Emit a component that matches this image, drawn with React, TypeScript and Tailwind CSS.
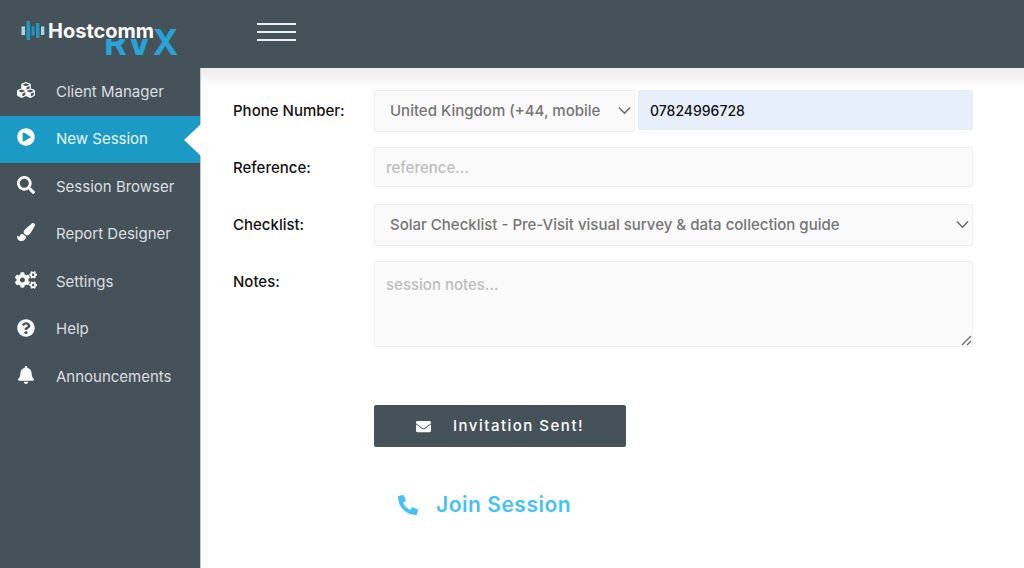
import { useState } from "react";
import type { ReactNode } from "react";
import type { IconType } from "react-icons";
import {
  FaBell,
  FaCogs,
  FaCubes,
  FaEnvelope,
  FaPaintBrush,
  FaPhoneAlt,
  FaPlayCircle,
  FaQuestionCircle,
  FaSearch,
} from "react-icons/fa";

const NAV: { label: string; icon: IconType; wide?: boolean }[] = [
  { label: "Client Manager", icon: FaCubes },
  { label: "New Session", icon: FaPlayCircle },
  { label: "Session Browser", icon: FaSearch },
  { label: "Report Designer", icon: FaPaintBrush },
  { label: "Settings", icon: FaCogs, wide: true },
  { label: "Help", icon: FaQuestionCircle },
  { label: "Announcements", icon: FaBell },
];

const FIELD =
  "block w-full rounded-xs border border-[#efefef] bg-[#fafafa] text-[15px] font-medium outline-none placeholder:text-[#bdbdbd]";

function Logo() {
  return (
    <svg width="170" height="48" viewBox="0 0 170 48" role="img" aria-label="Hostcomm RVX">
      <text x="88" y="47" fontFamily="Inter, sans-serif" fontSize="35" fontWeight="700" fill="#28a3d8">
        RVX
      </text>
      {/* the wordmark sits on its own plate, which covers the top of R and V */}
      <path d="M34 12h104v19H34z" fill="#465259" />
      <path d="M5.5 18.5H9V27H5.5zM25 18.5h3.3V27H25z" fill="#a5d7e8" />
      <path d="M10.5 13H14v19h-3.5zM15.5 18.5h3v9h-3zM20 15h3.5v15H20z" fill="#2396c3" />
      <text x="32" y="30" fontFamily="Inter, sans-serif" fontSize="20" fontWeight="700" fill="#fff">
        Hostcomm
      </text>
    </svg>
  );
}

function Chevron() {
  return (
    <svg
      className="pointer-events-none absolute top-4 right-1 text-[#666]"
      width="13"
      height="9"
      viewBox="0 0 13 9"
      fill="none"
      stroke="currentColor"
      strokeWidth="1.4"
    >
      <path d="M1 1.5l5.5 5.7L12 1.5" />
    </svg>
  );
}

function Row({ id, label, children }: { id: string; label: string; children: ReactNode }) {
  return (
    <div className="flex min-h-[57px] items-start">
      <label htmlFor={id} className="flex h-[42px] w-[141px] shrink-0 items-center text-[15px] font-medium text-[#111]">
        {label}
      </label>
      <div className="flex min-w-0 flex-1 gap-[3px]">{children}</div>
    </div>
  );
}

export default function App() {
  const [active, setActive] = useState("New Session");
  const [phone, setPhone] = useState("07824996728");

  return (
    <div className="flex min-h-screen flex-col bg-white font-['Inter',sans-serif]">
      <header className="flex h-[68px] items-center bg-[#465259] pb-1">
        <a href="#" className="flex w-[200px] shrink-0 pl-4">
          <Logo />
        </a>
        <button type="button" aria-label="Toggle menu" className="ml-[57px] flex w-[39px] flex-col gap-[6px]">
          <span className="h-[2px] w-full bg-[#eee]" />
          <span className="h-[2px] w-full bg-[#eee]" />
          <span className="h-[2px] w-full bg-[#eee]" />
        </button>
      </header>

      <div className="flex flex-1">
        <aside className="w-[200px] shrink-0 bg-[#465259]">
          <nav className="grid h-[333px] grid-rows-7">
            {NAV.map(({ label, icon: Icon, wide }) => (
              <a
                key={label}
                href="#"
                aria-current={label === active ? "page" : undefined}
                onClick={() => setActive(label)}
                className={`relative flex items-center text-[15px] ${
                  label === active ? "bg-[#1a9ac5] text-[#e8f5fa]" : "text-[#dcdfe1]"
                }`}
              >
                <span className="flex w-[56px] justify-center pr-1 pb-1 text-white">
                  <Icon className={wide ? "size-[22px]" : "size-[18px]"} />
                </span>
                {label}
                {label === active && (
                  <svg className="absolute top-2 -right-px z-10" width="17" height="32" viewBox="0 0 17 32">
                    <path d="M17 0v32L0 16z" fill="#fff" />
                  </svg>
                )}
              </a>
            ))}
          </nav>
        </aside>

        <main className="min-w-0 flex-1 border-l border-[#c4c8ca] bg-linear-to-b from-[#ececec] to-white bg-[length:100%_20px] bg-no-repeat pt-[22px] pr-[51px] pl-8">
          <form onSubmit={(e) => e.preventDefault()}>
            <Row id="phone" label="Phone Number:">
              <div className="relative w-[261px] shrink-0">
                <select
                  aria-label="Country"
                  className={`${FIELD} h-[42px] appearance-none pr-[34px] pl-[15px] text-[#757575]`}
                >
                  <option>United Kingdom (+44, mobile)</option>
                </select>
                <Chevron />
              </div>
              <input
                id="phone"
                type="tel"
                value={phone}
                onChange={(e) => setPhone(e.target.value)}
                className="h-10 w-full min-w-0 rounded-xs border border-[#e6ebf5] bg-[#e8effc] px-[11px] text-sm font-medium text-[#111] outline-none"
              />
            </Row>
            <Row id="reference" label="Reference:">
              <input id="reference" placeholder="reference..." className={`${FIELD} h-10 px-[11px]`} />
            </Row>
            <Row id="checklist" label="Checklist:">
              <div className="relative w-full">
                <select
                  id="checklist"
                  className={`${FIELD} h-[42px] appearance-none pr-[34px] pl-[15px] text-[#757575]`}
                >
                  <option>Solar Checklist - Pre-Visit visual survey &amp; data collection guide</option>
                </select>
                <Chevron />
              </div>
            </Row>
            <Row id="notes" label="Notes:">
              <div className="relative w-full">
                <textarea
                  id="notes"
                  placeholder="session notes..."
                  className={`${FIELD} h-[86px] resize-none px-[11px] py-3`}
                />
                <svg
                  className="pointer-events-none absolute right-px bottom-px"
                  width="11"
                  height="11"
                  viewBox="0 0 11 11"
                  stroke="#666"
                  strokeWidth="1.2"
                >
                  <path d="M1 10l9-9M6 10l4-4" />
                </svg>
              </div>
            </Row>

            <div className="flex flex-col items-start pt-[58px] pl-[141px]">
              <button
                type="submit"
                className="flex h-[42px] w-[252px] items-center justify-center gap-[22px] rounded-xs bg-[#465259] text-[15px] font-medium tracking-widest text-white"
              >
                <FaEnvelope className="size-[15px]" />
                Invitation Sent!
              </button>
              <a
                href="#"
                className="mt-11 ml-6 flex items-center gap-[18px] text-[21px] leading-7 font-semibold tracking-wide text-[#46c1f8]"
              >
                <FaPhoneAlt className="size-5" />
                Join Session
              </a>
            </div>
          </form>
        </main>
      </div>
    </div>
  );
}
